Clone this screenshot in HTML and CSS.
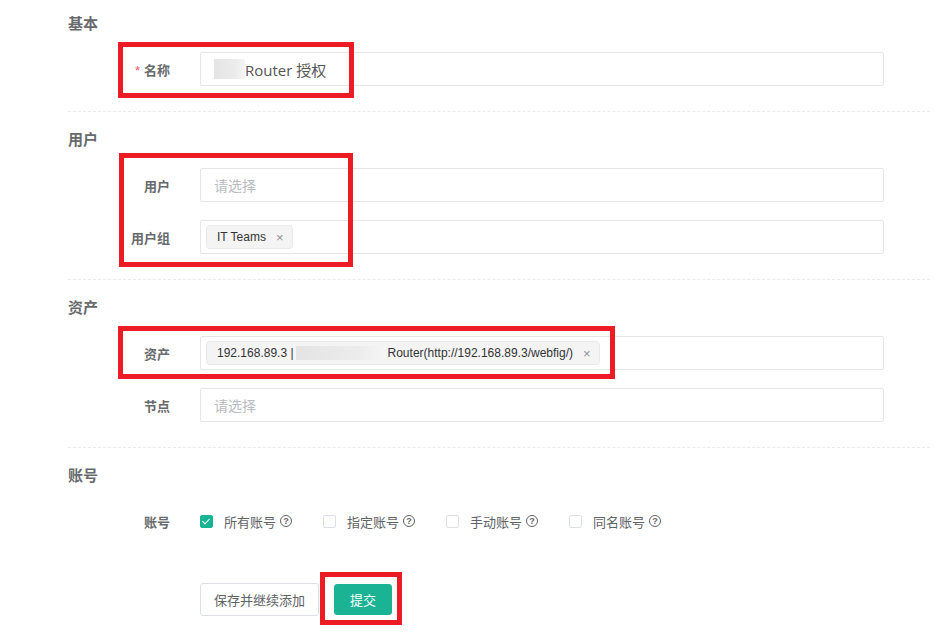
FILE: index.html
```html
<!DOCTYPE html>
<html lang="zh-CN">

<head>
    <meta charset="UTF-8">
    <meta name="viewport" content="width=device-width, initial-scale=1.0">
    <title>授权规则</title>
    <link rel="stylesheet" href="styles.css">
</head>

<body>
    <div class="page">
        <form class="form">
            <!-- 基本 -->
            <div class="section-title">基本</div>
            <div class="form-item">
                <label class="label"><span class="required">*</span>名称</label>
                <div class="input">
                    <span class="blur blur-name"></span>
                    <span class="value">Router 授权</span>
                </div>
            </div>
            <div class="divider"></div>

            <!-- 用户 -->
            <div class="section-title">用户</div>
            <div class="form-item">
                <label class="label">用户</label>
                <div class="input"><span class="placeholder">请选择</span></div>
            </div>
            <div class="form-item">
                <label class="label">用户组</label>
                <div class="input select">
                    <span class="tag">IT Teams<i class="tag-close">×</i></span>
                </div>
            </div>
            <div class="divider"></div>

            <!-- 资产 -->
            <div class="section-title">资产</div>
            <div class="form-item">
                <label class="label">资产</label>
                <div class="input select">
                    <span class="tag">192.168.89.3 | <span class="blur blur-asset"></span>Router(http://192.168.89.3/webfig/)<i class="tag-close">×</i></span>
                </div>
            </div>
            <div class="form-item">
                <label class="label">节点</label>
                <div class="input"><span class="placeholder">请选择</span></div>
            </div>
            <div class="divider"></div>

            <!-- 账号 -->
            <div class="section-title">账号</div>
            <div class="form-item">
                <label class="label">账号</label>
                <div class="checkbox-group">
                    <span class="checkbox checked"><span class="box"></span>所有账号<span class="help">?</span></span>
                    <span class="checkbox"><span class="box"></span>指定账号<span class="help">?</span></span>
                    <span class="checkbox"><span class="box"></span>手动账号<span class="help">?</span></span>
                    <span class="checkbox"><span class="box"></span>同名账号<span class="help">?</span></span>
                </div>
            </div>

            <div class="actions">
                <button type="button" class="btn">保存并继续添加</button>
                <button type="button" class="btn btn-primary">提交</button>
            </div>
        </form>

        <!-- 标注框 -->
        <div class="mark mark-name"></div>
        <div class="mark mark-user"></div>
        <div class="mark mark-asset"></div>
        <div class="mark mark-submit"></div>
    </div>
</body>

</html>
```

FILE: styles.css
```css
* {
    margin: 0;
    padding: 0;
    box-sizing: border-box;
}

body {
    background: #fff;
    font-family: 'Liberation Sans', 'Noto Sans CJK SC', sans-serif;
    color: #606266;
    font-size: 13px;
}

.page {
    position: relative;
    width: 950px;
    min-height: 635px;
    padding: 14px 20px 0 68px;
}

.section-title {
    font-size: 15px;
    line-height: 20px;
    font-weight: 600;
    color: #676a6c;
    margin-bottom: 18px;
}

.form-item {
    display: flex;
    align-items: center;
    height: 34px;
    margin-bottom: 18px;
}

.form-item:last-of-type {
    margin-bottom: 0;
}

.label {
    width: 132px;
    padding-right: 30px;
    text-align: right;
    font-weight: 700;
    color: #676a6c;
    font-size: 13px;
}

.required {
    color: #ed5565;
    margin-right: 4px;
    font-weight: 400;
}

.input {
    width: 684px;
    height: 34px;
    border: 1px solid #e5e6e7;
    border-radius: 2px;
    display: flex;
    align-items: center;
    padding-left: 13px;
    font-size: 14px;
}

.input.select {
    padding-left: 5px;
}

.value {
    font-family: 'Open Sans', 'Noto Sans CJK SC', sans-serif;
    font-size: 15px;
    color: #555;
}

.placeholder {
    color: #b8bbc0;
}

.blur {
    display: inline-block;
    background: linear-gradient(to right, #e4e4e4, #ececec 70%, #f6f6f6);
}

.blur-name {
    width: 31px;
    height: 20px;
}

.blur-asset {
    width: 90px;
    height: 14px;
    vertical-align: middle;
    margin: 0 2px 0 2px;
}

.tag {
    display: inline-flex;
    align-items: center;
    height: 24px;
    padding: 0 8px 0 10px;
    background: #f4f4f5;
    border: 1px solid #e9e9eb;
    border-radius: 4px;
    font-size: 12px;
    color: #333;
    white-space: nowrap;
}

.tag-close {
    font-style: normal;
    color: #909399;
    font-size: 13px;
    margin-left: 10px;
}

.divider {
    border-top: 1px dashed #e7eaec;
    margin: 25px 0 18px;
}

.checkbox-group {
    display: flex;
    align-items: center;
}

.checkbox {
    display: inline-flex;
    align-items: center;
    margin-right: 31px;
    font-size: 13px;
    color: #606266;
}

.box {
    width: 13px;
    height: 13px;
    border: 1px solid #dcdfe6;
    border-radius: 2px;
    margin-right: 11px;
    position: relative;
}

.checkbox.checked .box {
    background: #1ab394;
    border-color: #1ab394;
}

.checkbox.checked .box::after {
    content: '';
    position: absolute;
    left: 3px;
    top: 1px;
    width: 3px;
    height: 6px;
    border: solid #fff;
    border-width: 0 1px 1px 0;
    transform: rotate(45deg);
}

.help {
    display: inline-flex;
    align-items: center;
    justify-content: center;
    width: 12px;
    height: 12px;
    border: 1px solid #606266;
    border-radius: 50%;
    font-size: 9px;
    font-weight: 700;
    margin-left: 4px;
    line-height: 1;
}

.actions {
    display: flex;
    align-items: center;
    margin: 45px 0 0 132px;
}

.btn {
    height: 33px;
    padding: 0 13px;
    border: 1px solid #dcdfe6;
    border-radius: 3px;
    background: #fff;
    color: #606266;
    font-family: inherit;
    font-size: 13px;
}

.btn-primary {
    height: 31px;
    margin-left: 15px;
    padding: 0 15px;
    background: #1ab394;
    border-color: #1ab394;
    color: #fff;
}

/* 红色标注框 */
.mark {
    position: absolute;
    border: 5px solid #ed1c24;
}

.mark-name {
    left: 118px;
    top: 42px;
    width: 236px;
    height: 56px;
}

.mark-user {
    left: 119px;
    top: 153px;
    width: 234px;
    height: 114px;
}

.mark-asset {
    left: 118px;
    top: 326px;
    width: 497px;
    height: 53px;
}

.mark-submit {
    left: 320px;
    top: 572px;
    width: 82px;
    height: 53px;
}
```
